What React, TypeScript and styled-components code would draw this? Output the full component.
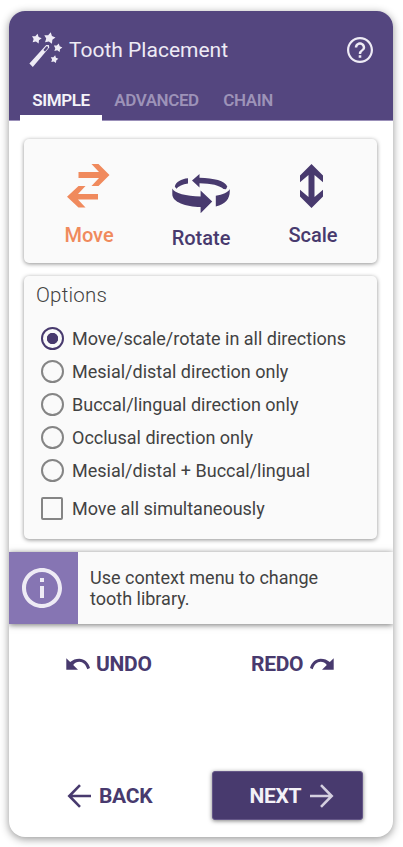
import React, { useState } from "react";
import styled, { createGlobalStyle } from "styled-components";

const PURPLE = "#483a6e";
const ORANGE = "#f08a5d";

const GlobalStyle = createGlobalStyle`
  * { box-sizing: border-box; }
  body { margin: 0; background: #fff; font-family: Roboto, sans-serif; color: #424242; }
  button { border: 0; padding: 0; background: none; font: inherit; color: inherit; }
  svg { display: block; flex: none; }
`;

const Panel = styled.main`
  width: 384px;
  height: 826px;
  margin: 11px 0 0 9px;
  display: flex;
  flex-direction: column;
  border-radius: 16px;
  overflow: hidden;
  background: #fff;
`;
const Shade = styled.div`
  display: flow-root;
  width: 403px;
  height: 847px;
  overflow: hidden;
  ${Panel} { box-shadow: 0 2px 8px rgba(0, 0, 0, 0.42); }
`;
const Header = styled.header`
  height: 110px;
  flex: none;
  background: #54467f;
  color: #eeebf5;
  border-bottom: 1px solid #9b90b9;
`;
const TitleRow = styled.div`
  height: 69px;
  padding: 8px 20px 0 20px;
  display: flex;
  align-items: center;
`;
const Title = styled.h1`
  margin: 0 auto 0 6px;
  font-size: 21px;
  line-height: 28px;
  font-weight: 400;
`;
const Tabs = styled.nav`
  display: flex;
  height: 41px;
  padding-left: 11px;
`;
const Tab = styled.button<{ $active?: boolean; $w: number }>`
  width: ${(p) => p.$w}px;
  height: 41px;
  padding-top: 5px;
  font-size: 17px;
  line-height: 34px;
  font-weight: 600;
  letter-spacing: -0.4px;
  color: ${(p) => (p.$active ? "#f5f3f9" : "#9d93b8")};
  border-bottom: 6px solid ${(p) => (p.$active ? "#fff" : "transparent")};
  display: flex;
  justify-content: center;
  align-items: center;
`;
const Card = styled.section`
  flex: none;
  margin: 0 16px 0 15px;
  border-radius: 5px;
  background: #fafafa;
  box-shadow: 0 1px 4px rgba(0, 0, 0, 0.44);
`;
const Tools = styled(Card)`
  height: 124px;
  margin-top: 18px;
  display: flex;
  padding-left: 9px;
`;
const Tool = styled.button<{ $color: string }>`
  width: 112px;
  height: 124px;
  display: flex;
  flex-direction: column;
  align-items: center;
  color: ${(p) => p.$color};
  font-size: 20px;
  line-height: 24px;
  font-weight: 500;
`;
const ToolIcon = styled.span<{ $h: number; $top: number; $nudge?: number }>`
  height: ${(p) => p.$h}px;
  padding-top: ${(p) => p.$top}px;
  padding-right: ${(p) => p.$nudge ?? 0}px;
`;
const Options = styled(Card)`
  height: 263px;
  margin-top: 13px;
  padding: 5px 0 0 12px;
`;
const Heading = styled.h2`
  margin: 0 0 13px;
  font-size: 20.5px;
  line-height: 28px;
  font-weight: 300;
  letter-spacing: 0.2px;
`;
const Choice = styled.label<{ $gap?: number }>`
  height: 33px;
  margin-top: ${(p) => p.$gap ?? 0}px;
  padding-left: 5px;
  display: flex;
  align-items: center;
  gap: 8px;
  font-size: 18px;
  line-height: 22px;
  white-space: nowrap;
`;
const Radio = styled.input`
  appearance: none;
  width: 23px;
  height: 23px;
  margin: 0;
  border: 2px solid #858585;
  border-radius: 50%;
  &:checked {
    border-color: ${PURPLE};
    background: radial-gradient(circle, ${PURPLE} 5.3px, transparent 6px);
  }
`;
const Check = styled.input`
  appearance: none;
  width: 22px;
  height: 23px;
  margin: 0 1px 0 0;
  border: 2px solid #858585;
  border-radius: 2px;
`;
const Notice = styled.aside`
  flex: none;
  height: 72px;
  margin-top: 13px;
  display: flex;
  background: #fafafa;
  box-shadow: 0 1px 6px rgba(0, 0, 0, 0.55);
`;
const NoticeIcon = styled.div`
  width: 69px;
  display: flex;
  align-items: center;
  padding-left: 13px;
  background: #8675b3;
`;
const NoticeText = styled.p`
  margin: 15px 0 0 12px;
  font-size: 18px;
  line-height: 21px;
`;
const Actions = styled.div`
  display: flex;
  height: 50px;
  align-items: center;
  flex: none;
`;
const History = styled(Actions)`
  margin-top: 15px;
  padding-left: 57px;
`;
const Footer = styled(Actions)`
  margin-top: auto;
  margin-bottom: 16px;
  padding-left: 58px;
`;
const Action = styled.button<{ $w?: number; $gap?: number }>`
  display: flex;
  align-items: center;
  gap: ${(p) => p.$gap ?? 6}px;
  width: ${(p) => (p.$w ? p.$w + "px" : "auto")};
  font-size: 21px;
  line-height: 26px;
  font-weight: 700;
  letter-spacing: -0.3px;
  color: ${PURPLE};
`;
const Next = styled(Action)`
  height: 49px;
  width: 151px;
  margin-bottom: 1px;
  padding: 1px 0 0 36.5px;
  border: 1px solid #655788;
  border-radius: 3px;
  background: ${PURPLE};
  color: #f3f1f7;
  box-shadow: 0 1px 4px rgba(0, 0, 0, 0.5);
`;

const STARS = [
  [36.5, 38.8, 5.2],
  [49.5, 38.2, 6],
  [57.8, 47.9, 4.6],
  [54.3, 59.3, 4.1],
];
function starPoints(cx: number, cy: number, r: number) {
  return Array.from({ length: 10 }, (_, i) => {
    const a = (-90 + 12 + i * 36) * (Math.PI / 180);
    const q = i % 2 ? r * 0.55 : r;
    return `${(cx + q * Math.cos(a)).toFixed(2)},${(cy + q * Math.sin(a)).toFixed(2)}`;
  }).join(" ");
}
const WandIcon = () => (
  <svg width="34" height="36" viewBox="29 32 34 36" fill="#eeebf5">
    {STARS.map(([x, y, r]) => (
      <polygon key={x} points={starPoints(x, y, r)} />
    ))}
    <path fillRule="evenodd" d="M29.4 63.5 46.2 45 48.8 44.9 49.3 47.5 32.8 66.9Z M43.4 50 45 51.4 48 48.1 47.8 46.4 46.4 46.3Z" />
  </svg>
);
const HelpIcon = () => (
  <svg width="26" height="26" viewBox="2 2 20 20" fill="#eeebf5">
    <path d="M11 16h2v2h-2zM12 2C6.48 2 2 6.48 2 12s4.48 10 10 10 10-4.48 10-10S17.52 2 12 2zm0 18.3c-4.6 0-8.3-3.7-8.3-8.3s3.7-8.3 8.3-8.3 8.3 3.7 8.3 8.3-3.7 8.3-8.3 8.3zM12 6c-2.21 0-4 1.79-4 4h1.9c0-1.15.95-2.1 2.1-2.1s2.1.95 2.1 2.1c0 2-3.05 1.75-3.05 5h1.9c0-2.25 3.05-2.5 3.05-5 0-2.21-1.79-4-4-4z" />
  </svg>
);
const MoveIcon = () => (
  <svg width="43" height="44" viewBox="0 0 43 44" fill="currentColor">
    <path d="M11.5 8H32L24.5 0H31.5L42.5 11 31.5 22H24.5L32 14H11.5Z" />
    <path d="M31 30H11L18.5 22H11.5L0 32.8 11.5 43.5H18.5L11 35.5H31Z" />
  </svg>
);
const RotateIcon = () => (
  <svg width="58" height="40" viewBox="0 0 58 40" fill="currentColor">
    <path d="M2.8 12.5C4 8 9 5 16 4.3V9.5C10.5 10.3 6.5 12 4.3 14.8Z" />
    <path d="M20 6.5 27.5 0V3.7C42 3.8 53 7 55.3 12.5L54 15.3 51.5 15C48 11.5 39 9.3 27.5 9.2V13.5Z" />
    <path d="M.3 14.5C2.5 19.5 14 22 28.6 22.4V16.5L40.2 27.5 28.6 39.3V33C14 33 0 28 .3 20Z" />
    <path d="M57.7 15C58.5 24.5 54 30 43.8 32.5V21.7C50.5 20.5 56.5 18.5 57.7 15Z" />
  </svg>
);
const ScaleIcon = () => (
  <svg width="23" height="44" viewBox="0 0 23 44" fill="currentColor">
    <path d="M11.5 0 23 11.5V18.3L14.5 11V33L23 25.7V32.5L11.5 44 0 32.5V25.7L8.5 33V11L0 18.3V11.5Z" />
  </svg>
);
const InfoIcon = () => (
  <svg width="40" height="40" viewBox="2 2 20 20" fill="#eeebf5">
    <path d="M11 7h2v2h-2zm0 4h2v6h-2zm1-9C6.48 2 2 6.48 2 12s4.48 10 10 10 10-4.48 10-10S17.52 2 12 2zm0 18c-4.41 0-8-3.59-8-8s3.59-8 8-8 8 3.59 8 8-3.59 8-8 8z" />
  </svg>
);
const UndoIcon = ({ redo = false }: { redo?: boolean }) => (
  <svg width="25" height="14" viewBox="0 0 25 14" fill="currentColor">
    <path
      transform={redo ? "matrix(-1 0 0 1 25 0)" : undefined}
      d="M.3 1.2 4.2 5C6.7 2.9 9.8 1.7 13.3 1.7 18.3 1.7 22.6 5.5 24 11L21.3 12.3C20 7.5 17 4.7 13.3 4.7 11 4.7 8.7 5.5 7.2 8L12 12.8H.3Z"
    />
  </svg>
);
const Arrow = ({ right = false }: { right?: boolean }) => (
  <svg width="25" height="24" viewBox="0 0 25 24" fill="none" stroke={right ? "#d4cfdf" : "currentColor"} strokeWidth="2.6">
    <path transform={right ? "matrix(-1 0 0 1 25 0)" : undefined} d="M24 12H3M13 1.2 2.3 12 13 22.8" />
  </svg>
);

const CHOICES = [
  "Move/scale/rotate in all directions",
  "Mesial/distal direction only",
  "Buccal/lingual direction only",
  "Occlusal direction only",
  "Mesial/distal + Buccal/lingual",
];

export default function App() {
  const [choice, setChoice] = useState(0);
  return (
    <>
      <GlobalStyle />
      <Shade>
        <Panel>
          <Header>
            <TitleRow>
              <WandIcon />
              <Title>Tooth Placement</Title>
              <HelpIcon />
            </TitleRow>
            <Tabs>
              <Tab $active $w={82}>SIMPLE</Tab>
              <Tab $w={109}>ADVANCED</Tab>
              <Tab $w={74}>CHAIN</Tab>
            </Tabs>
          </Header>
          <Tools>
            <Tool $color={ORANGE}>
              <ToolIcon $h={84} $top={25} $nudge={2}><MoveIcon /></ToolIcon>Move
            </Tool>
            <Tool $color={PURPLE}>
              <ToolIcon $h={87} $top={35}><RotateIcon /></ToolIcon>Rotate
            </Tool>
            <Tool $color={PURPLE}>
              <ToolIcon $h={84} $top={25} $nudge={3}><ScaleIcon /></ToolIcon>Scale
            </Tool>
          </Tools>
          <Options>
            <Heading>Options</Heading>
            {CHOICES.map((label, i) => (
              <Choice key={label}>
                <Radio type="radio" name="direction" checked={choice === i} onChange={() => setChoice(i)} />
                {label}
              </Choice>
            ))}
            <Choice $gap={5}>
              <Check type="checkbox" />
              Move all simultaneously
            </Choice>
          </Options>
          <Notice>
            <NoticeIcon><InfoIcon /></NoticeIcon>
            <NoticeText>Use context menu to change<br />tooth library.</NoticeText>
          </Notice>
          <History>
            <Action $w={185} $gap={5}><UndoIcon />UNDO</Action>
            <Action><span>REDO</span><UndoIcon redo /></Action>
          </History>
          <Footer>
            <Action $w={145} $gap={7}><Arrow />BACK</Action>
            <Next $gap={8}><span>NEXT</span><Arrow right /></Next>
          </Footer>
        </Panel>
      </Shade>
    </>
  );
}
